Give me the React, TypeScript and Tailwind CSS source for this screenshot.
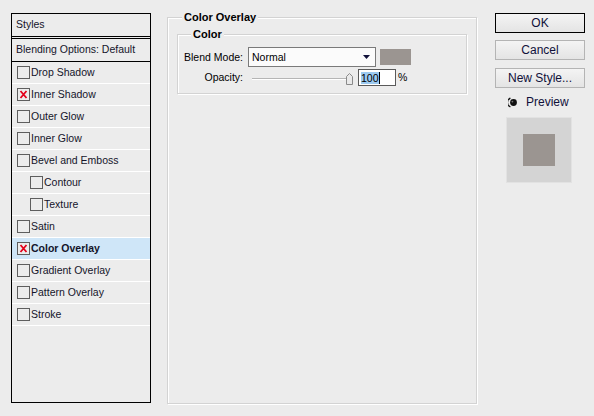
import React from "react";

function Check({ checked }: { checked?: boolean }) {
  return (
    <span className="w-[13px] h-[13px] shrink-0 border border-[#5e5e5e] bg-[#ececec] flex items-center justify-center">
      {checked && (
        <svg width="9" height="9" viewBox="0 0 9 9">
          <path d="M1.5 1 L7.5 8 M7.5 1 L1.5 8" stroke="#e3001b" strokeWidth="1.8" fill="none" />
        </svg>
      )}
    </span>
  );
}

const items: { label: string; checked?: boolean; sub?: boolean; selected?: boolean }[] = [
  { label: "Drop Shadow" },
  { label: "Inner Shadow", checked: true },
  { label: "Outer Glow" },
  { label: "Inner Glow" },
  { label: "Bevel and Emboss" },
  { label: "Contour", sub: true },
  { label: "Texture", sub: true },
  { label: "Satin" },
  { label: "Color Overlay", checked: true, selected: true },
  { label: "Gradient Overlay" },
  { label: "Pattern Overlay" },
  { label: "Stroke" },
];

export default function App() {
  return (
    <div className="w-[594px] h-[416px] bg-[#ececec] flex items-start font-['Liberation_Sans',Arial,sans-serif] text-[10.5px] text-[#14142a] leading-none">
      {/* Left styles list */}
      <div className="ml-[11px] mt-[13px] w-[140px] h-[390px] border border-black flex flex-col">
        <div className="h-[23px] border-b border-black flex items-center pl-[4px] pb-[1px]">Styles</div>
        <div className="mt-[1px] h-[24px] border-y border-black flex items-center pl-[4px] pb-[1px]">Blending Options: Default</div>
        {items.map((it) => (
          <div
            key={it.label}
            className={
              "h-[22px] border-b border-white flex items-center gap-[1px] " +
              (it.sub ? "pl-[18px] " : "pl-[5px] ") +
              (it.selected ? "bg-[#cfe6f8] font-bold" : "")
            }
          >
            <Check checked={it.checked} />
            <span className="pb-[1px]">{it.label}</span>
          </div>
        ))}
      </div>

      {/* Middle group */}
      <fieldset className="ml-[16px] mt-[11px] w-[310px] h-[393px] border border-[#d3d3d3] shadow-[inset_1px_1px_0_#fff,1px_1px_0_#fff] px-[9px]">
        <legend className="ml-[5px] px-[2px] font-bold text-[11px] text-black bg-[#ececec] leading-[13px]">Color Overlay</legend>
        <fieldset className="mt-[4px] w-[290px] h-[66px] border border-[#d3d3d3] shadow-[inset_1px_1px_0_#fff,1px_1px_0_#fff]">
          <legend className="ml-[13px] px-[2px] font-bold text-[11px] text-black bg-[#ececec] leading-[13px]">Color</legend>
          <div className="mt-[6px] flex items-center">
            <span className="w-[65px] text-right text-black">Blend Mode:</span>
            <div className="ml-[5px] w-[128px] h-[20px] border border-[#7a7a7a] bg-[#fbfbfb] flex items-center pl-[3px] text-black">
              <span className="flex-1">Normal</span>
              <svg width="7" height="4" viewBox="0 0 7 4" className="mr-[5px]">
                <path d="M0 0 H7 L3.5 4 Z" fill="#10103a" />
              </svg>
            </div>
            <div className="ml-[4px] w-[31px] h-[16px] bg-[#9b9591]" />
          </div>
          <div className="mt-[2px] flex items-center">
            <span className="w-[65px] text-right text-black">Opacity:</span>
            <div className="ml-[5px] w-[105px] h-[17px] relative">
              <div className="absolute left-[4px] right-[4px] top-[9px] h-[2px] border-t border-[#b5b5b5] border-b border-b-white" />
              <svg width="7" height="12" viewBox="0 0 7 12" className="absolute left-[98px] top-[4px]">
                <path d="M0.5 3.5 L3.5 0.5 L6.5 3.5 V11.5 H0.5 Z" fill="#e9e9e9" stroke="#8a8a8a" />
              </svg>
            </div>
            <div className="ml-[5px] w-[38px] h-[17px] border border-[#5a5a5a] bg-white flex items-center pl-[2px]">
              <span className="bg-[#9ccaf0] text-black px-0 leading-[12px]">100</span>
              <span className="w-[1px] h-[12px] bg-black" />
            </div>
            <span className="ml-[2px] text-black">%</span>
          </div>
        </fieldset>
      </fieldset>

      {/* Right buttons */}
      <div className="ml-[18px] mt-[13px] w-[90px] flex flex-col text-[12px] text-[#10103a]">
        <button className="h-[20px] border border-black bg-gradient-to-b from-[#f4f4f4] to-[#e4e4e4] flex items-center justify-center">OK</button>
        <button className="mt-[7px] h-[20px] border border-[#b4b4b4] bg-gradient-to-b from-[#f4f4f4] to-[#e4e4e4] flex items-center justify-center">Cancel</button>
        <button className="mt-[8px] h-[20px] border border-[#b4b4b4] bg-gradient-to-b from-[#f4f4f4] to-[#e4e4e4] flex items-center justify-center">New Style...</button>
        <div className="mt-[7px] h-[14px] flex items-center pl-[13px]">
          <svg width="9" height="11" viewBox="0 0 9 11">
            <path d="M2.4 1.2 A4.6 4.6 0 0 0 2.4 9.8" stroke="#111" strokeWidth="1.3" fill="none" />
            <circle cx="5.5" cy="5.5" r="3.4" fill="#111" />
            <circle cx="4.4" cy="4.6" r="0.9" fill="#777" />
          </svg>
          <span className="ml-[9px]">Preview</span>
        </div>
        <div className="mt-[8px] ml-[11px] w-[66px] h-[66px] bg-[#d4d4d4] border border-[#e2e2e2] flex items-center justify-center">
          <div className="w-[32px] h-[32px] bg-[#9b9591]" />
        </div>
      </div>
    </div>
  );
}
